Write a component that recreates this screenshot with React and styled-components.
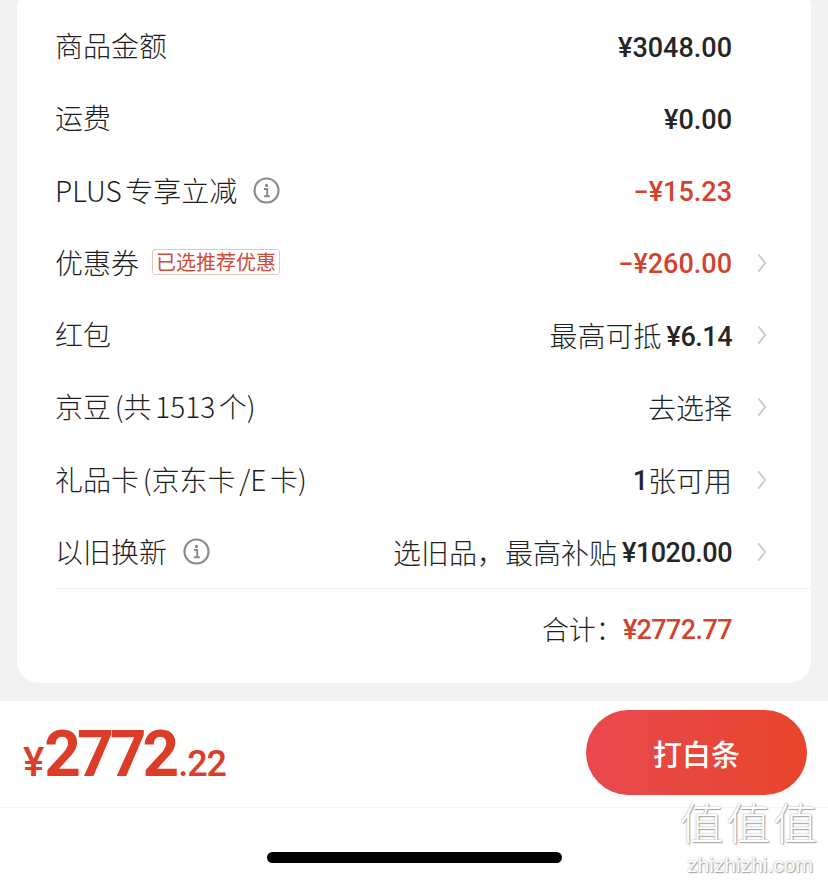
import React from 'react';
import styled, {createGlobalStyle} from 'styled-components';

const GlobalStyle = createGlobalStyle`
    html, body {
        margin:0;
        padding:0;
        background:#fff;
    }
    * {
        box-sizing:border-box;
    }
`;

const sans = `"Noto Sans CJK SC", "Noto Sans", sans-serif`;
const digits = `Roboto, "Noto Sans CJK SC", sans-serif`;

const InfoIcon = () => (
    <svg width="27" height="27" viewBox="0 0 27 27" fill="none">
        <circle cx="13.5" cy="13.5" r="12" stroke="#8a8a8a" strokeWidth="2.2" />
        <circle cx="13.5" cy="8.4" r="1.6" fill="#8a8a8a" />
        <path d="M11 12h3.2v7M10.8 19.2h6" stroke="#8a8a8a" strokeWidth="1.9" />
    </svg>
);

const Chevron = () => (
    <ChevronBox>
        <svg width="11" height="22" viewBox="0 0 11 22" fill="none">
            <path d="M1.5 1.5L9 11L1.5 20.5" stroke="#c9c9c9" strokeWidth="2" />
        </svg>
    </ChevronBox>
);

const App = () => {
    return (
        <>
            <GlobalStyle />
            <Page>
                <Content>
                    <Card>
                        <Row>
                            <Label>商品金额</Label>
                            <Value><Money>¥3048.00</Money><ChevronBox /></Value>
                        </Row>
                        <Row>
                            <Label>运费</Label>
                            <Value><Money>¥0.00</Money><ChevronBox /></Value>
                        </Row>
                        <Row>
                            <Label>PLUS 专享立减<IconSlot><InfoIcon /></IconSlot></Label>
                            <Value><Money color="#d2432f">−¥15.23</Money><ChevronBox /></Value>
                        </Row>
                        <Row>
                            <Label>优惠券<Tag>已选推荐优惠</Tag></Label>
                            <Value><Money color="#d2432f">−¥260.00</Money><Chevron /></Value>
                        </Row>
                        <Row>
                            <Label>红包</Label>
                            <Value>最高可抵<TightMoney>¥6.14</TightMoney><Chevron /></Value>
                        </Row>
                        <Row>
                            <Label>京豆 (共 1513 个)</Label>
                            <Value>去选择<Chevron /></Value>
                        </Row>
                        <Row>
                            <Label>礼品卡 (京东卡 /E 卡)</Label>
                            <Value><Money>1</Money>张可用<Chevron /></Value>
                        </Row>
                        <Row>
                            <Label>以旧换新<IconSlot><InfoIcon /></IconSlot></Label>
                            <Value>选旧品，最高补贴<TightMoney>¥1020.00</TightMoney><Chevron /></Value>
                        </Row>
                        <Total>
                            合计：<TotalMoney>¥2772.77</TotalMoney>
                        </Total>
                    </Card>
                </Content>
                <PayBar>
                    <Price>
                        <Yen>¥</Yen>
                        <Whole>2772</Whole>
                        <Cents>.22</Cents>
                    </Price>
                    <PayButton>打白条</PayButton>
                </PayBar>
                <HomeArea>
                    <HomeIndicator />
                </HomeArea>
                <Watermark>
                    <MarkGlyphs>值值值</MarkGlyphs>
                    <MarkUrl>zhizhizhi.com</MarkUrl>
                </Watermark>
            </Page>
        </>
    );
};

const Page = styled.div`
    position:relative;
    width:828px;
    height:880px;
    overflow:hidden;
    background:#fff;
    font-family:${sans};
`;

const Content = styled.div`
    display:flow-root;
    height:701px;
    padding:0 17px;
    background:#f2f2f2;
`;

const Card = styled.div`
    height:697px;
    margin-top:-14px;
    padding:24px 0 0 38px;
    background:#fff;
    border-radius:22px;
`;

const Row = styled.div`
    display:flex;
    justify-content:space-between;
    align-items:center;
    height:72.25px;
    padding-right:44px;
`;

const Label = styled.div`
    display:flex;
    align-items:center;
    height:40px;
    padding-bottom:2px;
    font-size:28px;
    line-height:38px;
    font-weight:300;
    word-spacing:-2.5px;
    color:#1f1f1f;
    white-space:pre;
`;

const IconSlot = styled.span`
    display:flex;
    margin:2px 0 0 16px;
`;

const Tag = styled.span`
    margin-left:13px;
    padding:0 3px;
    height:26px;
    line-height:23px;
    font-size:20px;
    font-weight:400;
    color:#cf4a38;
    border:1px solid #e8c4bd;
    border-radius:3px;
`;

const Value = styled.div`
    display:flex;
    align-items:center;
    font-size:28px;
    font-weight:300;
    color:#1f1f1f;
`;

const Money = styled.span`
    padding-top:3px;
    font-family:${digits};
    font-weight:500;
    font-size:27px;
    color:${({color}) => color || '#262626'};
`;

const TightMoney = styled(Money)`
    margin-left:5px;
    letter-spacing:-0.5px;
`;

const TotalMoney = styled(Money)`
    letter-spacing:-0.6px;
    color:#d2432f;
`;

const ChevronBox = styled.span`
    display:flex;
    width:35px;
    padding-left:25px;
`;

const Total = styled.div`
    display:flex;
    justify-content:flex-end;
    align-items:center;
    height:79px;
    padding-right:79px;
    border-top:1px solid #f2f2f2;
    font-size:27px;
    font-weight:300;
    color:#1f1f1f;
`;

const PayBar = styled.div`
    display:flex;
    justify-content:space-between;
    align-items:center;
    height:107px;
    padding:0 21px 3px 23px;
    background:#fff;
    border-bottom:1px solid #f4f4f4;
`;

const Price = styled.div`
    display:flex;
    align-items:baseline;
    margin-top:4px;
    color:#dc3d28;
    font-family:${digits};
`;

const Yen = styled.span`
    font-size:40px;
    font-weight:500;
`;

const Whole = styled.span`
    font-size:64px;
    font-weight:700;
    letter-spacing:-4px;
`;

const Cents = styled.span`
    margin-left:3px;
    font-size:36px;
    font-weight:500;
    letter-spacing:-1px;
`;

const PayButton = styled.button`
    width:221px;
    height:85px;
    border:none;
    border-radius:43px;
    background:linear-gradient(90deg, #e8494f, #e8452c);
    color:#fff;
    font-family:${sans};
    font-size:29px;
    font-weight:500;
`;

const HomeArea = styled.div`
    display:flex;
    justify-content:center;
    padding-top:44px;
`;

const HomeIndicator = styled.div`
    width:295px;
    height:11px;
    border-radius:6px;
    background:#000;
`;

const Watermark = styled.div`
    position:absolute;
    left:679px;
    top:792px;
    width:142px;
    text-align:center;
    color:#fff;
    text-shadow:0 0 2px #999, 1px 1px 1px #aaa;
`;

const MarkGlyphs = styled.div`
    font-size:44px;
    line-height:58px;
    letter-spacing:3px;
    font-weight:300;
`;

const MarkUrl = styled.div`
    margin-top:3px;
    font-family:"Liberation Sans", sans-serif;
    font-size:21px;
    line-height:24px;
`;

export default App;
